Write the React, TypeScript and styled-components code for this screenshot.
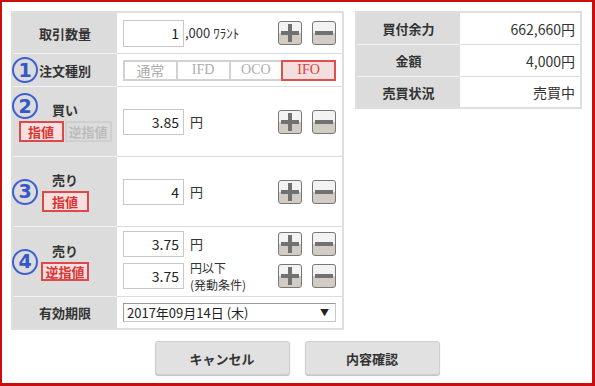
import React from "react";
import styled, { createGlobalStyle } from "styled-components";

const GlobalStyle = createGlobalStyle`
  html, body {
    margin: 0;
    padding: 0;
    background: #fff;
  }
  body {
    font-family: "Noto Sans CJK JP", "DejaVu Sans", sans-serif;
    color: #333;
  }
  * {
    box-sizing: border-box;
  }
`;

const Frame = styled.div`
  width: 595px;
  height: 386px;
  border: 2px solid #cc0d0d;
  border-right-width: 3px;
  border-bottom-width: 3px;
  padding: 9px 9px 0 9px;
  display: flex;
  flex-direction: column;
`;

const Top = styled.div`
  display: flex;
  gap: 11px;
  align-items: flex-start;
`;

const OrderTable = styled.div`
  width: 333px;
  border: 2px solid #dedede;
  display: flex;
  flex-direction: column;
`;

const Row = styled.div<{ $h: number }>`
  display: grid;
  grid-template-columns: 104px 1fr;
  height: ${(p) => p.$h}px;

  &:first-child > div {
    border-top: 0;
  }
`;

const LabelCell = styled.div`
  position: relative;
  background: #dcdcdc;
  border-top: 1px solid #f3f3f3;
  display: flex;
  flex-direction: column;
  align-items: center;
  justify-content: center;
  gap: 3px;
  font-size: 13px;
  font-weight: bold;
  line-height: 17px;
  color: #333;
`;

const ValueCell = styled.div`
  background: #fff;
  border-top: 1px solid #dcdcdc;
  display: flex;
  flex-direction: column;
  justify-content: center;
  gap: 2px;
  padding: 0 6px;
`;

const Line = styled.div`
  display: flex;
  align-items: center;
`;

const Qty = styled.input<{ $h?: number }>`
  width: 61px;
  height: ${(p) => p.$h ?? 26}px;
  border: 1px solid #c8c8c8;
  padding: 0 4px;
  text-align: right;
  font-family: "Noto Sans CJK JP", "DejaVu Sans", sans-serif;
  font-size: 14px;
  color: #222;
  outline: none;
`;

const Unit = styled.span<{ $gap?: number; $small?: boolean }>`
  flex: 1;
  margin-left: ${(p) => p.$gap ?? 6}px;
  font-size: ${(p) => (p.$small ? 12 : 13)}px;
  line-height: ${(p) => (p.$small ? 17 : 14)}px;
  color: #333;
`;

const Steppers = styled.div`
  display: flex;
  gap: 10px;
`;

const StepButton = styled.button`
  width: 24px;
  height: 24px;
  padding: 0;
  border: 1px solid #777;
  border-radius: 3px;
  background: linear-gradient(#f3f3f3 0 50%, #d3ccc4 50% 100%);
  display: flex;
  align-items: center;
  justify-content: center;
`;

const Badge = styled.span<{ $top?: number }>`
  position: absolute;
  left: -1px;
  top: ${(p) => (p.$top !== undefined ? `${p.$top}px` : "50%")};
  transform: ${(p) => (p.$top !== undefined ? "none" : "translateY(-50%)")};
  width: 26px;
  height: 26px;
  border: 2px solid #3d5fd0;
  border-radius: 50%;
  display: flex;
  align-items: center;
  justify-content: center;
  color: #3557c9;
  font-family: "DejaVu Sans", sans-serif;
  font-size: 19px;
  font-weight: bold;
  line-height: 1;
`;

const Tags = styled.div`
  display: flex;
  gap: 1px;
`;

const Tag = styled.span<{ $on?: boolean; $w: number; $h?: number }>`
  width: ${(p) => p.$w}px;
  height: ${(p) => p.$h ?? 21}px;
  display: flex;
  align-items: center;
  justify-content: center;
  border: 2px solid ${(p) => (p.$on ? "#dd4848" : "#cfcfcf")};
  background: ${(p) => (p.$on ? "#f8e0e0" : "#dcdcdc")};
  color: ${(p) => (p.$on ? "#d83434" : "#bcbcbc")};
  font-size: 13px;
  font-weight: bold;
`;

const Segments = styled.div`
  display: flex;
  width: 213px;
  height: 21px;
`;

const Segment = styled.span<{ $active?: boolean }>`
  flex: 1;
  position: relative;
  z-index: ${(p) => (p.$active ? 1 : 0)};
  display: flex;
  align-items: center;
  justify-content: center;
  border: 2px solid ${(p) => (p.$active ? "#dc5050" : "#d2d2d2")};
  background: ${(p) => (p.$active ? "#f5dede" : "#fff")};
  color: ${(p) => (p.$active ? "#d84040" : "#adadad")};
  font-family: "Liberation Serif", "Noto Sans CJK JP", serif;
  font-size: 14px;

  & + & {
    margin-left: -2px;
  }
`;

const DateSelect = styled.div`
  width: 213px;
  height: 19px;
  border: 1px solid #9a9a9a;
  border-bottom-color: #c8c8c8;
  border-right-color: #c8c8c8;
  display: flex;
  align-items: center;
  justify-content: space-between;
  padding: 0 6px 0 3px;
  font-size: 13px;
  color: #222;

  & > b {
    font-size: 9px;
    font-weight: normal;
  }
`;

const InfoTable = styled.div`
  width: 227px;
  border: 2px solid #dedede;
  display: flex;
  flex-direction: column;
`;

const InfoRow = styled.div<{ $h: number }>`
  display: grid;
  grid-template-columns: 103px 1fr;
  height: ${(p) => p.$h}px;

  &:first-child > div {
    border-top: 0;
  }
`;

const InfoLabel = styled.div`
  background: #dcdcdc;
  border-top: 1px solid #f3f3f3;
  display: flex;
  align-items: center;
  justify-content: center;
  font-size: 13px;
  font-weight: bold;
  color: #333;
`;

const InfoValue = styled.div`
  background: #fff;
  border-top: 1px solid #dcdcdc;
  display: flex;
  align-items: center;
  justify-content: flex-end;
  padding-right: 5px;
  font-size: 14px;
  color: #333;
`;

const Actions = styled.div`
  display: flex;
  justify-content: center;
  gap: 15px;
  margin-top: 11px;
`;

const ActionButton = styled.button`
  width: 135px;
  height: 34px;
  border: 1px solid #cfcfcf;
  border-radius: 3px;
  background: #e1e1e1;
  box-shadow: 0 1px 1px rgba(0, 0, 0, 0.25);
  font-family: "Noto Sans CJK JP", sans-serif;
  font-size: 13px;
  font-weight: bold;
  color: #333;
`;

const Plus = () => (
  <StepButton type="button" aria-label="plus">
    <svg width="22" height="22" viewBox="0 0 22 22">
      <rect x="9" y="2" width="4" height="18" fill="#717171" />
      <rect x="2" y="9" width="18" height="4" fill="#717171" />
    </svg>
  </StepButton>
);

const Minus = () => (
  <StepButton type="button" aria-label="minus">
    <svg width="22" height="22" viewBox="0 0 22 22">
      <rect x="2" y="9" width="18" height="4" fill="#717171" />
    </svg>
  </StepButton>
);

const Stepper = () => (
  <Steppers>
    <Plus />
    <Minus />
  </Steppers>
);

const info = [
  { label: "買付余力", value: "662,660円", h: 31 },
  { label: "金額", value: "4,000円", h: 32 },
  { label: "売買状況", value: "売買中", h: 31 },
];

const segments = ["通常", "IFD", "OCO", "IFO"];

const App = () => (
  <>
    <GlobalStyle />
    <Frame>
      <Top>
        <OrderTable>
          <Row $h={40}>
            <LabelCell>取引数量</LabelCell>
            <ValueCell>
              <Line>
                <Qty $h={27} value="1" readOnly />
                <Unit $gap={1}>,000 ﾜﾗﾝﾄ</Unit>
                <Stepper />
              </Line>
            </ValueCell>
          </Row>

          <Row $h={33}>
            <LabelCell>
              <Badge>1</Badge>
              注文種別
            </LabelCell>
            <ValueCell>
              <Segments>
                {segments.map((s) => (
                  <Segment key={s} $active={s === "IFO"}>
                    {s}
                  </Segment>
                ))}
              </Segments>
            </ValueCell>
          </Row>

          <Row $h={70}>
            <LabelCell>
              <Badge $top={6}>2</Badge>
              <span>買い</span>
              <Tags>
                <Tag $on $w={45}>指値</Tag>
                <Tag $w={47}>逆指値</Tag>
              </Tags>
            </LabelCell>
            <ValueCell>
              <Line>
                <Qty value="3.85" readOnly />
                <Unit>円</Unit>
                <Stepper />
              </Line>
            </ValueCell>
          </Row>

          <Row $h={70}>
            <LabelCell>
              <Badge>3</Badge>
              <span>売り</span>
              <Tag $on $w={47}>指値</Tag>
            </LabelCell>
            <ValueCell>
              <Line>
                <Qty value="4" readOnly />
                <Unit>円</Unit>
                <Stepper />
              </Line>
            </ValueCell>
          </Row>

          <Row $h={70}>
            <LabelCell>
              <Badge>4</Badge>
              <span>売り</span>
              <Tag $on $w={48} $h={19}>逆指値</Tag>
            </LabelCell>
            <ValueCell>
              <Line>
                <Qty value="3.75" readOnly />
                <Unit>円</Unit>
                <Stepper />
              </Line>
              <Line>
                <Qty value="3.75" readOnly />
                <Unit $small>
                  円以下
                  <br />
                  (発動条件)
                </Unit>
                <Stepper />
              </Line>
            </ValueCell>
          </Row>

          <Row $h={32}>
            <LabelCell>有効期限</LabelCell>
            <ValueCell>
              <DateSelect>
                <span>2017年09月14日 (木)</span>
                <b>▼</b>
              </DateSelect>
            </ValueCell>
          </Row>
        </OrderTable>

        <InfoTable>
          {info.map((r) => (
            <InfoRow key={r.label} $h={r.h}>
              <InfoLabel>{r.label}</InfoLabel>
              <InfoValue>{r.value}</InfoValue>
            </InfoRow>
          ))}
        </InfoTable>
      </Top>

      <Actions>
        <ActionButton type="button">キャンセル</ActionButton>
        <ActionButton type="button">内容確認</ActionButton>
      </Actions>
    </Frame>
  </>
);

export default App;
